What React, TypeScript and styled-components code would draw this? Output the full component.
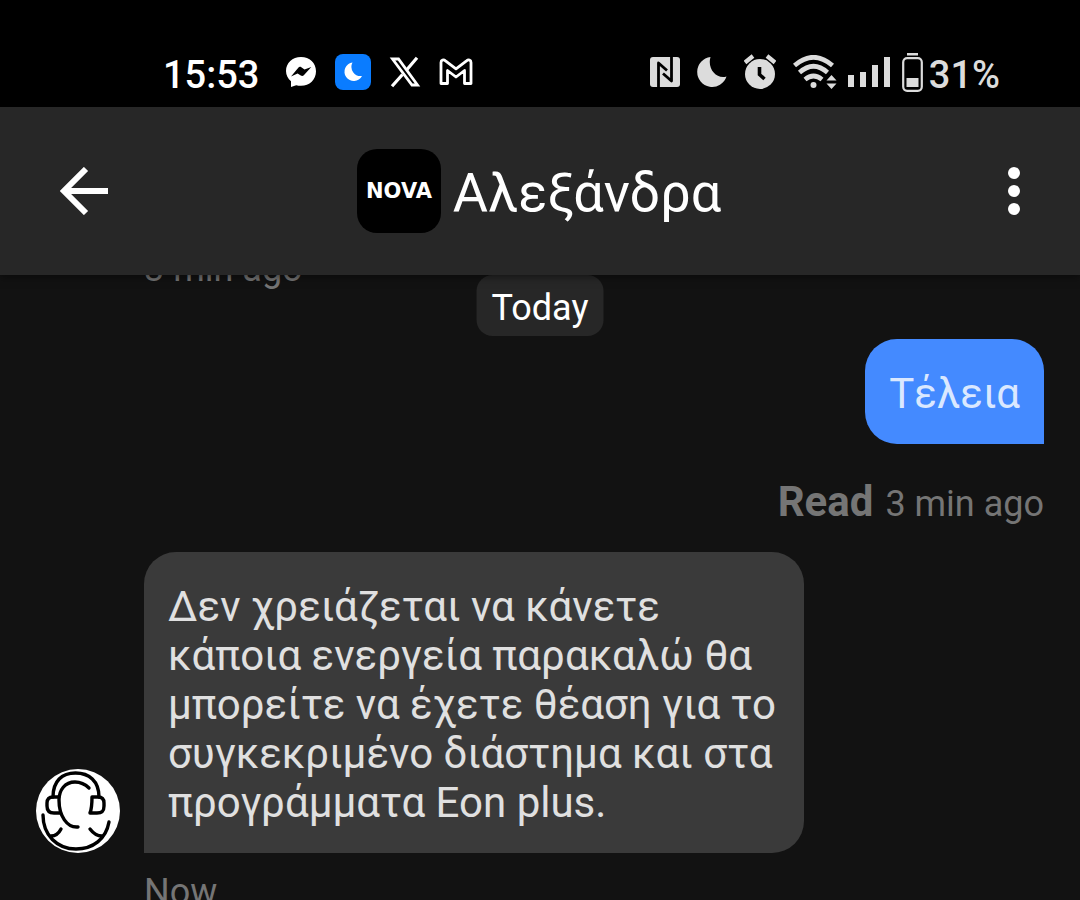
import React from "react";
import styled, { createGlobalStyle } from "styled-components";

const GlobalStyle = createGlobalStyle`
  *, *::before, *::after { box-sizing: border-box; }
  body {
    margin: 0;
    background: #121212;
    font-family: Roboto, "Noto Sans", sans-serif;
  }
`;

const Screen = styled.div`
  display: flex;
  flex-direction: column;
  height: 100vh;
  overflow: hidden;
  background: #121212;
`;

const StatusBar = styled.div`
  display: flex;
  flex: none;
  align-items: center;
  justify-content: space-between;
  height: 107px;
  padding: 37px 80px 0 163px;
  background: #000;
`;

const StatusGroup = styled.div<{ $gap: number; $color?: string }>`
  display: flex;
  align-items: center;
  gap: ${(p) => p.$gap}px;
  color: ${(p) => p.$color ?? "inherit"};

  svg { display: block; flex: none; }
`;

const StatusText = styled.span`
  padding-top: 5px;
  font-size: 38px;
  line-height: 44px;
  font-weight: 500;
`;

const Clock = styled(StatusText)`
  margin-right: 8px;
`;

const Header = styled.header`
  display: grid;
  grid-template-columns: 72px 1fr 72px;
  align-items: center;
  flex: none;
  height: 168px;
  padding: 0 30px 0 48px;
  background: #272727;
  box-shadow: 0 2px 8px rgba(0, 0, 0, 0.5);
  z-index: 2;
`;

const IconButton = styled.button`
  display: flex;
  align-items: center;
  justify-content: center;
  width: 72px;
  height: 72px;
  padding: 0;
  border: 0;
  background: none;
  color: #fff;
`;

const Contact = styled.div`
  display: flex;
  align-items: center;
  justify-content: center;
  gap: 12px;
  padding-right: 20px;
`;

const Logo = styled.svg`
  display: block;
  flex: none;
  border-radius: 20px;
  background: #000;
`;

const ContactName = styled.h1`
  margin: 0;
  padding-top: 4px;
  color: #fff;
  font-size: 54px;
  line-height: 64px;
  font-weight: 400;
`;

const Conversation = styled.main`
  position: relative;
  flex: 1;
  min-height: 0;
  overflow: hidden;
`;

const DateChip = styled.div`
  position: absolute;
  top: 0;
  left: 50%;
  transform: translateX(-50%);
  padding: 12px 15px 7px;
  border-radius: 16px;
  background: #272727;
  color: #fff;
  font-size: 36px;
  line-height: 42px;
`;

const Thread = styled.div`
  display: flex;
  flex-direction: column;
  margin-top: -27px;
  padding: 0 36px;
`;

const Received = styled.div`
  display: grid;
  grid-template-columns: 84px minmax(0, 660px);
  column-gap: 24px;
  align-items: end;
`;

const Sent = styled.div`
  display: flex;
  flex-direction: column;
  align-items: flex-end;
  margin: 49px 0 26px;
`;

const Bubble = styled.p<{ $own?: boolean }>`
  margin: 0;
  padding: 30px 24px 26px;
  border-radius: ${(p) => (p.$own ? "32px 32px 0 32px" : "32px 32px 32px 0")};
  background: ${(p) => (p.$own ? "#448aff" : "#3a3a3a")};
  color: ${(p) => (p.$own ? "#dae8ff" : "#e0e0e0")};
  font-size: 42px;
  line-height: 49px;
`;

const Time = styled.span`
  grid-column: 2;
  color: #757575;
  font-size: 36px;
  line-height: 42px;
`;

const LatestTime = styled(Time)`
  margin-top: 18px;
`;

const Receipt = styled.div`
  display: flex;
  align-items: baseline;
  gap: 12px;
  margin-top: 33px;
`;

const ReadMark = styled.strong`
  color: #757575;
  font-size: 42px;
  line-height: 49px;
  font-weight: 700;
`;

const Avatar = styled.svg`
  display: block;
  width: 84px;
  height: 84px;
`;

const MessengerIcon = () => (
  <svg width="32" height="32" viewBox="0 0 32 32" aria-label="Messenger">
    <path fill="currentColor" d="M16 1C7.400 1 1 7 1 15c0 4.300 2 7.700 5 10.200V31l5.200-1.800c1.500.4 3.200.6 4.800.6 8.600 0 15-6.300 15-14.600S24.600 1 16 1Z" />
    <path fill="#000" d="m6 20.500 7.300-8.800c.8-1 2-1.100 3-.4l3.200 2.300 6.800-2.600-7.500 8.200c-.8.900-2 1-3 .3l-3.200-2.100Z" />
  </svg>
);

const BlueMoonIcon = () => (
  <svg width="36" height="36" viewBox="0 0 36 36" aria-label="Sleep mode">
    <rect width="36" height="36" rx="8" fill="#0a7cff" />
    <path fill="#fff" d="M17.500 8.500a9.300 9.300 0 1 0 9.500 13.500A9.300 9.300 0 0 1 17.500 8.500Z" />
  </svg>
);

const XIcon = () => (
  <svg width="32" height="32" viewBox="0 0 32 32" fill="none" stroke="currentColor" aria-label="X">
    <path strokeWidth="2.800" d="M3.500 3h6L28.500 29H23Z" />
    <path strokeWidth="3.200" d="M28 1.700 18 13.500M13.500 18.500 3 30.300" />
  </svg>
);

const GmailIcon = () => (
  <svg width="34" height="28" viewBox="0 0 34 28" fill="none" stroke="currentColor" strokeWidth="2.800" strokeLinejoin="round" aria-label="Gmail">
    <path d="M2 25.500V4.500C2 2 4.500 1.200 6.500 2.800L17 10.800l10.500-8C29.500 1.200 32 2 32 4.500v21h-6.500V12.500L17 19l-8.500-6.500v13Z" />
  </svg>
);

const NfcIcon = () => (
  <svg width="30" height="30" viewBox="0 0 30 30" aria-label="NFC">
    <rect width="30" height="30" rx="3" fill="currentColor" />
    <path fill="none" stroke="#000" strokeWidth="2.800" strokeLinejoin="round" d="M8.500 30V6L17 13.500M21.500 0v24L13 16.500" />
  </svg>
);

const MoonIcon = () => (
  <svg width="30" height="30" viewBox="0 0 30 30" aria-label="Do not disturb">
    <path fill="currentColor" d="M13.500 0A15 15 0 1 0 29.500 19.500C19.500 22.500 10 12 13.500 0Z" />
  </svg>
);

const AlarmIcon = () => (
  <svg width="32" height="36" viewBox="0 0 32 36" aria-label="Alarm">
    <circle cx="16" cy="20" r="15" fill="currentColor" />
    <path fill="none" stroke="#000" strokeWidth="3.600" d="M15.500 13v7.500l5 4.500" />
    <path fill="none" stroke="currentColor" strokeWidth="4.200" d="m1 8.500 8-6.500M31 8.500 23 2" />
  </svg>
);

const WifiIcon = () => (
  <svg width="44" height="34" viewBox="0 0 44 34" aria-label="Wi-Fi">
    <g fill="none" stroke="currentColor" strokeWidth="4.600">
      <path d="M1.500 10.500Q20.500-6 39.500 10.500" />
      <path d="M6.500 17.500Q20.500 5 34.500 17.500" />
      <path d="M12 24.500q8.500-7 17 0" />
    </g>
    <circle cx="20.500" cy="30" r="3" fill="currentColor" />
    <path fill="currentColor" d="m38.500 20 5 5.500h-10ZM38.500 34l5-5.500h-10Z" />
  </svg>
);

const SignalIcon = () => (
  <svg width="43" height="30" viewBox="0 0 43 30" fill="currentColor" aria-label="Signal">
    <path d="M0 18h6v12H0ZM12 15h6v15h-6ZM24 8h6v22h-6ZM36 0h6v30h-6Z" />
  </svg>
);

const BatteryIcon = () => (
  <svg width="21" height="39" viewBox="0 0 21 39" aria-label="Battery">
    <path fill="currentColor" d="M5 0h11v2.500H5ZM4.500 25h12v9h-12Z" />
    <rect x="1.200" y="5.200" width="18.600" height="32.600" rx="4" fill="none" stroke="currentColor" strokeWidth="2.200" />
  </svg>
);

const BackIcon = () => (
  <svg width="48" height="48" viewBox="0 0 48 48" fill="none" stroke="currentColor" strokeWidth="6" aria-hidden="true">
    <path d="M48 24H6M26 2 4 24l22 22" />
  </svg>
);

const MoreIcon = () => (
  <svg width="12" height="48" viewBox="0 0 12 48" fill="currentColor" aria-hidden="true">
    <circle cx="6" cy="6" r="6" />
    <circle cx="6" cy="24" r="6" />
    <circle cx="6" cy="42" r="6" />
  </svg>
);

const NovaLogo = () => (
  <Logo width="84" height="84" viewBox="0 0 84 84">
    <text x="42" y="49" textAnchor="middle" fill="#fff" fontFamily="DejaVu Sans, sans-serif" fontWeight="700" fontSize="21">
      NOVA
    </text>
  </Logo>
);

const AgentAvatar = () => (
  <Avatar viewBox="0 0 84 84" role="img" aria-label="Support agent">
    <circle cx="42" cy="42" r="42" fill="#fff" />
    <g fill="none" stroke="#000" strokeWidth="3.400" strokeLinecap="round" strokeLinejoin="round">
      <path d="M17 28C17 12 26 4 39.500 4S63 12 63 28" />
      <path d="M53 19C49 15 45 13 39 13 29 13 23 21 23 31 23 47 31 59 42 58" />
      <path d="M23 28h-6c-4 0-6 2-6 6v3c0 5 3 7 7 7h6M56 28h6c4 0 6 2 6 6v3c0 5-2 7-7 7h-7c2-5 2-11 2-16Z" />
      <path d="M7 46C7 66 21 80 40 80c17 0 30-10 33-27M15 67c5 0 8-3 10-7M66 67c-5 0-9-3-12-7" />
    </g>
  </Avatar>
);

export default function App() {
  return (
    <Screen>
      <GlobalStyle />
      <StatusBar>
        <StatusGroup $gap={18} $color="#fff">
          <Clock>15:53</Clock>
          <MessengerIcon />
          <BlueMoonIcon />
          <XIcon />
          <GmailIcon />
        </StatusGroup>
        <StatusGroup $gap={11} $color="#dcdcdc">
          <StatusGroup $gap={17}>
            <NfcIcon />
            <MoonIcon />
            <AlarmIcon />
            <WifiIcon />
          </StatusGroup>
          <SignalIcon />
          <StatusGroup $gap={6}>
            <BatteryIcon />
            <StatusText>31%</StatusText>
          </StatusGroup>
        </StatusGroup>
      </StatusBar>
      <Header>
        <IconButton type="button" aria-label="Back">
          <BackIcon />
        </IconButton>
        <Contact>
          <NovaLogo />
          <ContactName>Αλεξάνδρα</ContactName>
        </Contact>
        <IconButton type="button" aria-label="More options">
          <MoreIcon />
        </IconButton>
      </Header>
      <Conversation>
        <Thread>
          <Received>
            <Time>3 min ago</Time>
          </Received>
          <Sent>
            <Bubble $own>Τέλεια</Bubble>
            <Receipt>
              <ReadMark>Read</ReadMark>
              <Time>3 min ago</Time>
            </Receipt>
          </Sent>
          <Received>
            <AgentAvatar />
            <Bubble>
              Δεν χρειάζεται να κάνετε κάποια ενεργεία παρακαλώ θα μπορείτε να έχετε θέαση για το
              συγκεκριμένο διάστημα και στα προγράμματα Eon plus.
            </Bubble>
            <LatestTime>Now</LatestTime>
          </Received>
        </Thread>
        <DateChip>Today</DateChip>
      </Conversation>
    </Screen>
  );
}
